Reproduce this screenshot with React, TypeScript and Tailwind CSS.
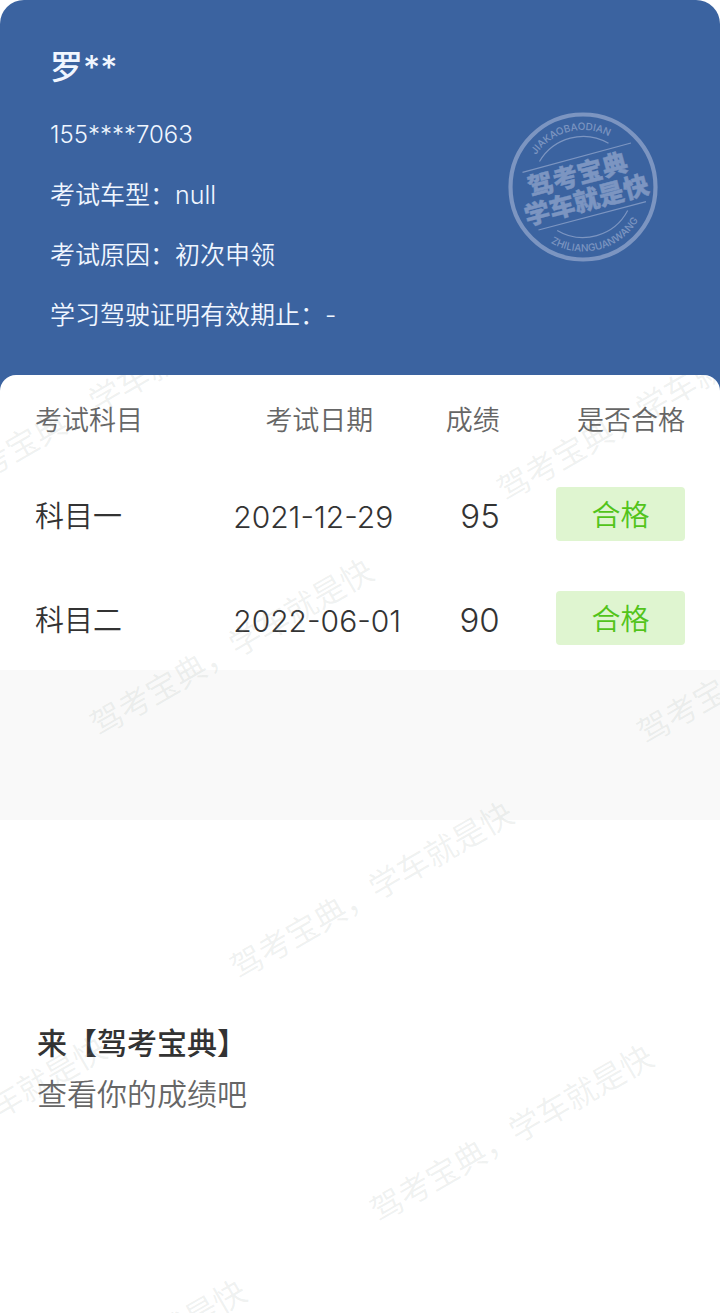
const slogan = '驾考宝典，学车就是快';

const watermarks = [
  '-left-[68px] top-[14px]',
  'left-[479px] top-[22px]',
  'left-[72px] top-[257px]',
  'left-[619px] top-[265px]',
  'left-[212px] top-[500px]',
  '-left-[195px] top-[735px]',
  'left-[352px] top-[743px]',
  '-left-[55px] top-[978px]',
];

const results = [
  { subject: '科目一', date: '2021-12-29', score: 95, status: '合格' },
  { subject: '科目二', date: '2022-06-01', score: 90, status: '合格' },
];

function Stamp() {
  return (
    <svg viewBox="0 0 150 150" className="mt-[75px] h-[150px] w-[150px] shrink-0" fill="none" stroke="#7c95c1" role="img" aria-label="驾考宝典 学车就是快">
      <defs>
        <path id="stamp-top" d="M18 75A57 57 0 0 1 132 75" />
        <path id="stamp-bottom" d="M10.500 75A64.500 64.500 0 0 0 139.500 75" />
      </defs>
      <circle cx="75" cy="75" r="72.5" strokeWidth="4.2" />
      <path d="M31.5 49.5A50.5 50.5 0 0 1 100.500 31.300" strokeWidth="1.2" />
      <path d="M49.200 118.400A50.5 50.5 0 0 0 119.700 98.500" strokeWidth="1.2" />
      <path d="M14.500 60.300L123 31M30.500 118L138 89.700" strokeWidth="1.2" />
      <g fill="#7c95c1" stroke="none" fontFamily="Inter, sans-serif" fontSize="10" fontWeight="500">
        <text textAnchor="middle"><textPath href="#stamp-top" startOffset="42%">JIAKAOBAODIAN</textPath></text>
        <text textAnchor="middle"><textPath href="#stamp-bottom" startOffset="58%">ZHILIANGUANWANG</textPath></text>
      </g>
      <g fill="#7c95c1" stroke="#7c95c1" strokeWidth="0.4" transform="rotate(-15 75 75)" fontFamily="'Noto Sans CJK SC', sans-serif" fontWeight="900" fontSize="25.500" textAnchor="middle">
        <text x="73" y="71">驾考宝典</text>
        <text x="75" y="98">学车就是快</text>
      </g>
    </svg>
  );
}

export default function App() {
  return (
    <div className="min-h-screen bg-white font-['Inter','Noto_Sans_CJK_SC',sans-serif] font-[350] text-[#333333]">
      <header className="-mb-4 flex justify-between rounded-t-3xl bg-[#3b63a0] pt-[37px] pr-[62px] pb-[46px] pl-[50px] text-[25px] leading-[60px] text-[#f0f6ff]">
        <div>
          <h1 className="mb-2 text-[33px] leading-[60px] font-medium">罗**</h1>
          <p className="text-[24px] leading-[60px]">155****7063</p>
          <p>考试车型：null</p>
          <p>考试原因：初次申领</p>
          <p>学习驾驶证明有效期止：-</p>
        </div>
        <Stamp />
      </header>

      <main className="relative min-h-[938px] overflow-hidden rounded-t-2xl bg-white">
        <section className="px-[35px]">
          <table className="w-full table-fixed text-[29px] whitespace-nowrap">
            <thead>
              <tr className="h-[87px] text-[27px] text-[#666666]">
                <th className="w-[30.5%] pt-1.5 text-left font-[350]">考试科目</th>
                <th className="w-[26.5%] pt-1.5 text-center font-[350]">考试日期</th>
                <th className="w-[14.5%] pt-1.5 text-right font-[350]">成绩</th>
                <th className="w-[28.5%] pt-1.5 text-right font-[350]">是否合格</th>
              </tr>
            </thead>
            <tbody>
              {results.map((r) => (
                <tr key={r.subject} className="h-[104px]">
                  <td className="pt-1.5">{r.subject}</td>
                  <td className="pt-1.5 text-[30px] font-light">{r.date}</td>
                  <td className="pt-1.5 text-right text-[33px] font-light">{r.score}</td>
                  <td>
                    <span className="ml-auto flex h-[54px] w-[129px] items-center justify-center rounded bg-[#dff5d0] pt-1 text-[#52c41a]">
                      {r.status}
                    </span>
                  </td>
                </tr>
              ))}
            </tbody>
          </table>
        </section>

        <div className="h-[150px] bg-[#f9f9f9]" />

        <section className="px-[37px] pt-[198px] text-[30px] leading-[51px]">
          <h2 className="font-medium">来【驾考宝典】</h2>
          <p className="text-[#666666]">查看你的成绩吧</p>
        </section>

        <div className="pointer-events-none absolute inset-0 overflow-hidden" aria-hidden="true">
          {watermarks.map((place) => (
            <span
              key={place}
              className={`absolute w-80 -rotate-30 text-center text-[32px] leading-8 whitespace-nowrap text-[#8c9996]/15 ${place}`}
            >
              {slogan}
            </span>
          ))}
        </div>
      </main>
    </div>
  );
}
